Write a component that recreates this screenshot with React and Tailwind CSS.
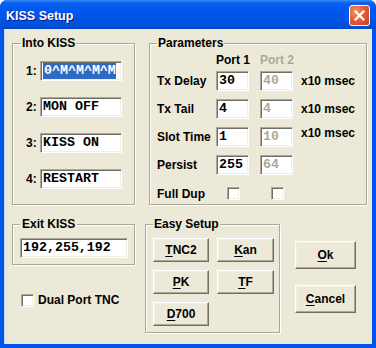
import React from "react"

const sunken =
  "border border-t-[#aca899] border-l-[#aca899] border-b-white border-r-white shadow-[inset_1px_1px_0_#716f64,inset_-1px_-1px_0_#f1efe2]"
const raised =
  "border border-t-white border-l-white border-b-[#716f64] border-r-[#716f64] shadow-[inset_-1px_-1px_0_#aca899,inset_1px_1px_0_#f1efe2]"
const groupBox = "border border-[#aca899] shadow-[1px_1px_0_#fff,inset_1px_1px_0_#fff]"

function Field({ value, width, disabled, children }) {
  return (
    <div
      className={`h-[20px] ${width} ${sunken} bg-white flex items-center overflow-hidden pl-[2px] font-['Liberation_Mono',monospace] font-bold text-[13.3px] leading-[16px] whitespace-nowrap ${
        disabled ? "text-[#aca899]" : "text-black"
      }`}
    >
      {children || value}
    </div>
  )
}

function Check() {
  return <div className={`w-[13px] h-[13px] shrink-0 bg-white ${sunken}`} />
}

function Btn({ u, rest, className = "" }) {
  return (
    <div className={`${raised} bg-[#ece9d8] flex items-center justify-center font-bold text-[12px] text-black ${className}`}>
      <span>
        <span className="underline underline-offset-2">{u}</span>
        {rest}
      </span>
    </div>
  )
}

function Legend({ children }) {
  return <legend className="px-[1px] leading-[14px] font-bold text-[12px] text-black bg-[#ece9d8]">{children}</legend>
}

function ParamRow({ label, p1, p2, unit, raise }) {
  return (
    <div className="flex items-center h-[20px]">
      <div className="w-[59px] font-bold text-[12px] whitespace-nowrap">{label}</div>
      <Field value={p1} width="w-[33px]" />
      <div className="ml-[11px]">
        <Field value={p2} width="w-[33px]" disabled />
      </div>
      {unit && <span className={`ml-[8px] font-bold text-[12px] whitespace-nowrap ${raise ? "mb-[9px]" : ""}`}>x10 msec</span>}
    </div>
  )
}

export default function App() {
  return (
    <div className="w-[376px] h-[348px] bg-[#0055ea] rounded-t-[7px] flex flex-col font-['Liberation_Sans',Arial,sans-serif] overflow-hidden">
      {/* title bar */}
      <div className="h-[29px] shrink-0 flex items-center justify-between pl-[6px] pr-[6px] bg-[linear-gradient(to_bottom,#3c8ef8_0%,#0a5ff0_10%,#0058ee_30%,#0054e3_70%,#004fd8_90%,#0046c4_100%)]">
        <span className="text-white font-bold text-[12.5px] mt-[3px] [text-shadow:1px_1px_0_#0a1a8a]">KISS Setup</span>
        <div className="w-[21px] h-[21px] mt-[1px] rounded-[3px] border border-white bg-[radial-gradient(circle_at_30%_30%,#f0906c_0%,#e0603a_45%,#c23c1c_100%)] flex items-center justify-center">
          <svg width="11" height="11" viewBox="0 0 11 11">
            <path d="M1.5 1.5 L9.5 9.5 M9.5 1.5 L1.5 9.5" stroke="white" strokeWidth="2.2" strokeLinecap="square" />
          </svg>
        </div>
      </div>

      {/* client area */}
      <div className="mx-[4px] mb-[4px] flex-1 bg-[#ece9d8] pt-[7px] pl-[7px] border-l border-[#c7d7f5] text-black">
        <div className="flex gap-[14px] h-[169px]">
          {/* Into KISS */}
          <fieldset className={`w-[123px] h-[169px] pl-[8px] ${groupBox}`}>
            <Legend>Into KISS</Legend>
            <div className="ml-[5px] mt-[11px] flex flex-col gap-[16px]">
              {[
                ["1:", null],
                ["2:", "MON OFF"],
                ["3:", "KISS ON"],
                ["4:", "RESTART"],
              ].map(([n, v]) => (
                <div key={n} className="flex items-center">
                  <span className="w-[14px] font-bold text-[12px]">{n}</span>
                  <Field width="w-[82px]" value={v}>
                    {v === null && <span className="bg-[#316ac5] text-white pl-[1px]">0^M^M^M^M</span>}
                  </Field>
                </div>
              ))}
            </div>
          </fieldset>

          {/* Parameters */}
          <fieldset className={`w-[218px] h-[169px] pl-[7px] ${groupBox}`}>
            <Legend>Parameters</Legend>
            <div className="mt-[3px] flex h-[14px] items-center font-bold text-[12px] whitespace-nowrap">
              <span className="ml-[59px] w-[44px]">Port 1</span>
              <span className="text-[#aca899]">Port 2</span>
            </div>
            <div className="mt-[4px] flex flex-col gap-[8px]">
              <ParamRow label="Tx Delay" p1="30" p2="40" unit />
              <ParamRow label="Tx Tail" p1="4" p2="4" unit />
              <ParamRow label="Slot Time" p1="1" p2="10" unit raise />
              <ParamRow label="Persist" p1="255" p2="64" />
            </div>
            <div className="mt-[12px] flex items-center h-[13px]">
              <span className="w-[59px] font-bold text-[12px]">Full Dup</span>
              <div className="ml-[11px] w-[33px]">
                <Check />
              </div>
              <div className="ml-[11px]">
                <Check />
              </div>
            </div>
          </fieldset>
        </div>

        <div className="mt-[12px] flex">
          {/* Exit KISS + dual port */}
          <div className="w-[123px]">
            <fieldset className={`w-[123px] h-[48px] pl-[7px] ${groupBox}`}>
              <legend className="px-[2px] leading-[14px] font-bold text-[12px] bg-[#ece9d8]">Exit KISS</legend>
              <div className="mt-[7px]">
                <Field width="w-[108px]" value="192,255,192" />
              </div>
            </fieldset>
            <div className="mt-[26px] ml-[9px] flex items-center gap-[4px]">
              <Check />
              <span className="font-bold text-[12px]">Dual Port TNC</span>
            </div>
          </div>

          {/* Easy Setup */}
          <fieldset className={`ml-[10px] w-[135px] h-[116px] pl-[7px] ${groupBox}`}>
            <Legend>Easy Setup</Legend>
            <div className="mt-[7px] grid grid-cols-[56px_57px] gap-x-[8px] gap-y-[8px]">
              <Btn u="T" rest="NC2" className="h-[24px]" />
              <Btn u="K" rest="an" className="h-[24px]" />
              <Btn u="P" rest="K" className="h-[24px]" />
              <Btn u="T" rest="F" className="h-[24px]" />
              <Btn u="D" rest="700" className="h-[24px]" />
            </div>
          </fieldset>

          {/* Ok / Cancel */}
          <div className="ml-[15px] mt-[24px] flex flex-col gap-[16px]">
            <Btn u="O" rest="k" className="w-[61px] h-[28px]" />
            <Btn u="C" rest="ancel" className="w-[61px] h-[28px]" />
          </div>
        </div>
      </div>
    </div>
  )
}
